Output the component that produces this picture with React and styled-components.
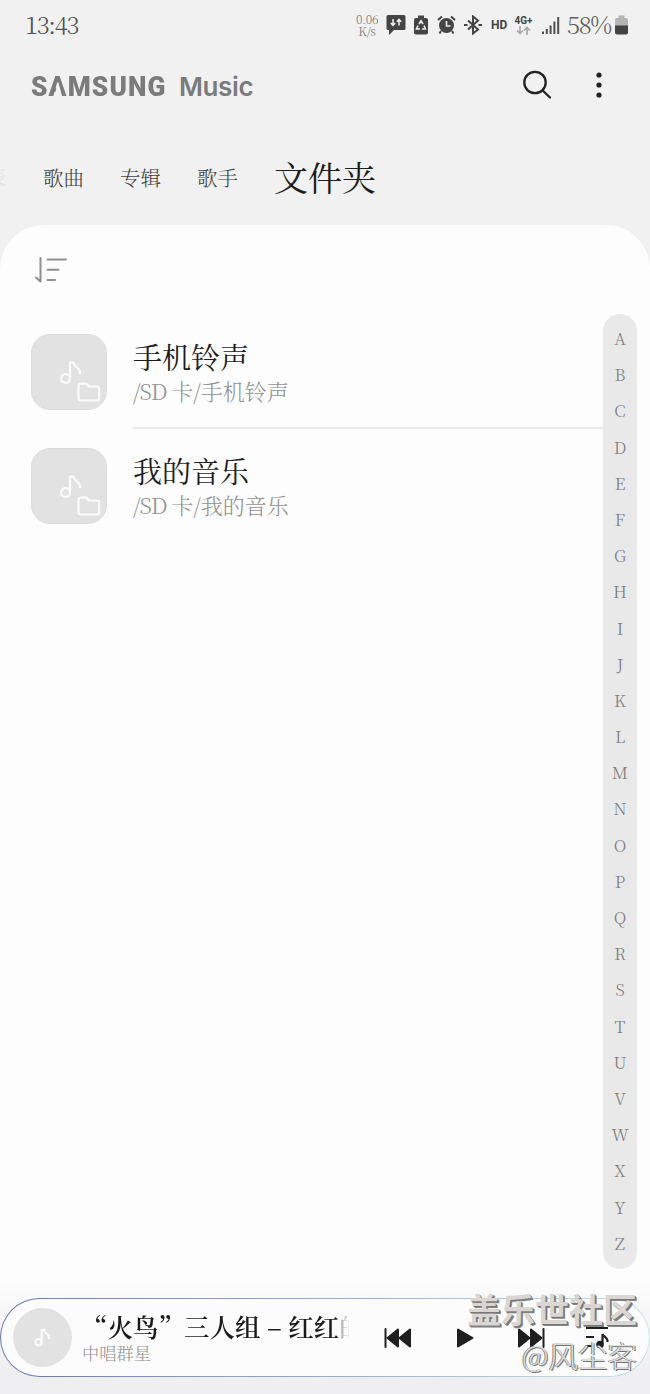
import React from "react";
import styled, { createGlobalStyle } from "styled-components";

const GlobalStyle = createGlobalStyle`
  * {
    box-sizing: border-box;
  }
  body {
    margin: 0;
    background: #f1f1f1;
    font-family: "Noto Serif CJK SC", "Liberation Serif", "Noto Sans CJK SC", serif;
    font-weight: 300;
  }
  svg {
    display: block;
    flex: none;
  }
`;

const Screen = styled.div`
  position: relative;
  display: flex;
  flex-direction: column;
  width: 650px;
  height: 1394px;
  overflow: hidden;
  background: #f1f1f1;
`;

const StatusBar = styled.div`
  display: flex;
  align-items: center;
  height: 50px;
  padding: 0 22px 0 25px;
  color: #505050;
`;

const Clock = styled.span`
  flex: 1;
  font-size: 24px;
  line-height: 28px;
  letter-spacing: -1.3px;
  padding-bottom: 2px;
`;

const Speed = styled.span`
  width: 24px;
  margin-right: 7px;
  font-size: 12px;
  line-height: 12px;
  letter-spacing: -0.3px;
  text-align: center;
  color: #777;
`;

const StatusIcon = styled.svg`
  margin-right: ${(p) => p.$gap || 0}px;
`;

const Hd = styled.span`
  width: 17px;
  margin-right: 6px;
  font: bold 12px "Roboto", sans-serif;
  color: #444;
`;

const Network = styled.span`
  display: flex;
  flex-direction: column;
  align-items: center;
  width: 19px;
  margin-right: 9px;
  font: bold 10px/11px "Roboto", sans-serif;
  color: #444;
`;

const Percent = styled.span`
  width: 45px;
  margin-right: 3px;
  padding-bottom: 2px;
  font-size: 24px;
  line-height: 28px;
  letter-spacing: -1.3px;
  white-space: nowrap;
  color: #606060;
`;

const Header = styled.header`
  display: flex;
  align-items: center;
  height: 70px;
  padding: 0 44px 0 31px;
`;

const Logo = styled.h1`
  display: flex;
  align-items: center;
  flex: 1;
  margin: 0;
  padding-top: 3px;
  color: #7b7b7b;
  line-height: 30px;
`;

const Brand = styled.span`
  width: 148px;
  font: 900 27.5px/30px "Roboto", "Liberation Sans", sans-serif;

  span {
    display: inline-block;
    transform: scaleX(0.955);
    transform-origin: left;
    letter-spacing: 1.2px;
  }
`;

/* the brand's A has no crossbar */
const OpenA = styled.i`
  position: relative;
  font-style: normal;
  &::after {
    content: "";
    position: absolute;
    left: 5.5px;
    bottom: 5px;
    width: 9px;
    height: 16px;
    background: #f1f1f1;
    clip-path: polygon(50% 0, 100% 100%, 0 100%);
  }
`;

const Product = styled.span`
  font: 600 26px/30px "Inter", sans-serif;
  letter-spacing: -0.4px;
`;

const HeaderIcons = styled.div`
  display: flex;
  align-items: center;
  gap: 40px;
`;

const Tabs = styled.nav`
  display: flex;
  align-items: center;
  height: 105px;
  padding: 8px 0 0;
`;

const Tab = styled.span`
  margin-right: ${(p) => p.$gap || 0}px;
  font-size: ${(p) => (p.$active ? 34 : 20.5)}px;
  font-weight: ${(p) => (p.$active ? 400 : 300)};
  line-height: 40px;
  color: ${(p) => (p.$active ? "#1c1c1c" : "#404040")};
`;

const CutTab = styled.span`
  display: flex;
  justify-content: flex-end;
  width: 6px;
  margin-right: 37px;
  overflow: hidden;
  font-size: 20px;
  white-space: nowrap;
  color: #e3e3e3;
`;

const Panel = styled.main`
  display: flex;
  flex-direction: column;
  height: 1169px;
  border-radius: 44px 44px 0 0;
  background: linear-gradient(#fdfdfd 0, #fdfdfd 1050px, #efeff1 1145px);
`;

const Toolbar = styled.div`
  height: 89px;
  padding: 31px 32px 0;
`;

const Body = styled.div`
  display: flex;
  height: 955px;
  padding-right: 13px;
`;

const List = styled.div`
  flex: 1;
  padding-top: 1px;
`;

const Row = styled.div`
  display: flex;
  align-items: center;
  height: 114px;
  padding-left: 31px;
  gap: 26px;
`;

const Cover = styled.div`
  width: 76px;
  height: 76px;
  border-radius: 19px;
  border: 1px solid #dcdcdc;
  background: #e2e2e2;
`;

const RowText = styled.div`
  display: flex;
  flex-direction: column;
  flex: 1;
  height: 114px;
  padding-top: 23px;
  border-bottom: ${(p) => (p.$divider ? "2px solid #e8e8e8" : "none")};
`;

const Name = styled.span`
  font-size: 29px;
  font-weight: 400;
  line-height: 38px;
  color: #1d1d1d;
`;

const Path = styled.span`
  font-size: 22px;
  line-height: 30px;
  color: #929292;
`;

const Storage = styled.span`
  letter-spacing: -1px;
`;

const IndexBar = styled.div`
  display: flex;
  flex-direction: column;
  width: 34px;
  height: 955px;
  padding: 7px 0;
  border-radius: 17px;
  background: #e9e9e9;
`;

const Letter = styled.span`
  height: 36.2px;
  font-size: 16.5px;
  line-height: 35px;
  text-align: center;
  color: #7c7c7c;
`;

const Player = styled.footer`
  display: flex;
  align-items: center;
  height: 79px;
  margin-top: 29px;
  padding: 0 25px 0 12px;
  border: 1.5px solid transparent;
  border-radius: 40px;
  background:
    linear-gradient(#fcfcfd, #fcfcfd) padding-box,
    linear-gradient(90deg, #6878b4, #92add0 50%, #c6e5e5) border-box;
`;

const Disc = styled.div`
  display: flex;
  align-items: center;
  justify-content: center;
  width: 59px;
  height: 59px;
  border-radius: 50%;
  background: #e2e2e2;
`;

const Track = styled.div`
  display: flex;
  flex-direction: column;
  width: 267px;
  margin-left: 10px;
  padding-bottom: 3px;
`;

const Title = styled.span`
  height: 32px;
  overflow: hidden;
  font-size: 25.5px;
  font-weight: 600;
  line-height: 32px;
  white-space: nowrap;
  color: #1b1b1b;
  mask-image: linear-gradient(90deg, #000 254px, rgba(0, 0, 0, 0.4) 258px, transparent 268px);
`;

const Artist = styled.span`
  font-size: 17.3px;
  line-height: 21px;
  color: #929292;
`;

const Controls = styled.div`
  display: flex;
  align-items: center;
  width: 228px;
  margin-left: 35px;
`;

const Control = styled.svg`
  margin-right: ${(p) => p.$gap || 0}px;
`;

const Watermark = styled.div`
  position: absolute;
  right: 13px;
  bottom: 17px;
  display: flex;
  flex-direction: column;
  align-items: flex-end;
  font-family: "Noto Sans CJK SC", sans-serif;
  white-space: nowrap;
`;

const Community = styled.span`
  font-size: 34px;
  font-weight: 700;
  line-height: 44px;
  color: #d9d6d4;
  text-shadow: 1px 1px 0 #777, 2px 2px 0 #858585;
`;

const Author = styled.span`
  font-size: 29.5px;
  font-weight: 300;
  line-height: 46px;
  color: #dcdcdc;
  text-shadow: 1px 1px 0 #747474, -1px 0 0 #8a8a8a;
`;

const Note = ({ size, color }) => (
  <svg width={size} height={size} viewBox="0 0 24 24" fill="none" stroke={color} strokeWidth="2.8" strokeLinecap="round">
    <circle cx="7" cy="18" r="4" />
    <path d="M11 18V2.500h3c0 4 6.500 4 6.300 10.500" strokeLinejoin="round" />
  </svg>
);

const FolderCover = () => (
  <Cover>
    <svg width="74" height="74" viewBox="0 0 74 74" fill="none" stroke="#fbfbfb" strokeWidth="2.2" strokeLinejoin="round" strokeLinecap="round">
      <circle cx="33.500" cy="43.500" r="4.400" />
      <path d="M38 43.500V27.500h3.500c0 4.500 7 4.500 6.500 11" />
      <path d="M46.500 51c0-1.500.8-2.300 2.300-2.300h5.700l2.300 2.800h8c1.500 0 2.300.8 2.300 2.300v9.500c0 1.500-.8 2.200-2.300 2.200h-16c-1.500 0-2.300-.7-2.300-2.200z" />
    </svg>
  </Cover>
);

const folders = ["手机铃声", "我的音乐"];

const letters = "ABCDEFGHIJKLMNOPQRSTUVWXYZ".split("");

const App = () => {
  return (
    <Screen>
      <GlobalStyle />
      <StatusBar>
        <Clock>13:43</Clock>
        <Speed>0.06 K/s</Speed>
        <StatusIcon $gap={8} width="20" height="20" viewBox="0 0 20 20">
          <path d="M2 0h16q1.500 0 1.500 1.500v12q0 1.500-1.500 1.500H8l-5 5v-5H2Q.5 15 .5 13.500v-12Q.5 0 2 0z" fill="#444" />
          <path d="M7 4v6M4.800 8L7 10.300 9.200 8M13 10.500v-6M10.800 6.700L13 4.400l2.200 2.300" fill="none" stroke="#f1f1f1" strokeWidth="1.500" />
        </StatusIcon>
        <StatusIcon $gap={9} width="14" height="20" viewBox="0 0 14 20">
          <path d="M4 0.500h6V3h2q2 0 2 2v12.500q0 2-2 2H2q-2 0-2-2V5q0-2 2-2h2z" fill="#444" />
          <path d="M5 9l2-3.200L9 9M10 10.500l1.500 3.500H8M6 14H2.500L4 10.500" fill="none" stroke="#f1f1f1" strokeWidth="1.600" />
        </StatusIcon>
        <StatusIcon $gap={8} width="19" height="20" viewBox="0 0 19 20">
          <circle cx="9.500" cy="10.500" r="7.500" fill="#444" />
          <path d="M1 5l4-3.500M18 5l-4-3.500M4 16l-1.500 2.500M15 16l1.500 2.500" stroke="#444" strokeWidth="2" />
          <path d="M9.500 6v5h4" fill="none" stroke="#f1f1f1" strokeWidth="1.600" />
        </StatusIcon>
        <StatusIcon $gap={9} width="18" height="20" viewBox="0 0 18 20" fill="none" stroke="#444" strokeWidth="2">
          <path d="M4 5.500l10 9-5 4V1.500l5 4-10 9" />
          <path d="M0 10h3.500M14.500 10H18" />
        </StatusIcon>
        <Hd>HD</Hd>
        <Network>
          4G+
          <svg width="15" height="9" viewBox="0 0 15 9" fill="none" stroke="#aaa" strokeWidth="1.700">
            <path d="M4 0v7.500M1 4.500l3 3 3-3M11 9V1.500M8 4.500l3-3 3 3" />
          </svg>
        </Network>
        <StatusIcon $gap={7} width="18" height="17" viewBox="0 0 18 17" fill="#505050">
          <path d="M0 14.500h2V17H0zM3.800 12h2v5h-2zM7.600 8.500h2V17h-2zM11.400 4.500h2V17h-2zM15.200 0h2V17h-2z" />
        </StatusIcon>
        <Percent>58%</Percent>
        <svg width="13" height="20" viewBox="0 0 13 20">
          <path d="M3.500.5h6V3h1.500q2 0 2 2v6H0V5q0-2 2-2h1.500z" fill="#b5b5b5" />
          <path d="M0 10.500h13v7q0 2-2 2H2q-2 0-2-2z" fill="#444" />
        </svg>
      </StatusBar>

      <Header>
        <Logo>
          <Brand>
            <span>
              S<OpenA>A</OpenA>MSUNG
            </span>
          </Brand>
          <Product>Music</Product>
        </Logo>
        <HeaderIcons>
          <svg width="30" height="30" viewBox="0 0 30 30" fill="none" stroke="#222" strokeWidth="2.300" strokeLinecap="round">
            <circle cx="13" cy="12.500" r="10.700" />
            <path d="M20.700 20.500l7.300 7" />
          </svg>
          <svg width="14" height="28" viewBox="0 0 14 28" fill="#222">
            <circle cx="7" cy="4" r="2.600" />
            <circle cx="7" cy="14" r="2.600" />
            <circle cx="7" cy="24" r="2.600" />
          </svg>
        </HeaderIcons>
      </Header>

      <Tabs>
        <CutTab>表</CutTab>
        <Tab $gap={36}>歌曲</Tab>
        <Tab $gap={36}>专辑</Tab>
        <Tab $gap={36}>歌手</Tab>
        <Tab $active>文件夹</Tab>
      </Tabs>

      <Panel>
        <Toolbar>
          <svg width="36" height="28" viewBox="0 0 36 28" fill="none" stroke="#8f8f8f" strokeWidth="2" strokeLinecap="round">
            <path d="M8.500 2v23.500L4 21.500M15.500 3.500h18.500M15.500 13.800h11M15.500 24h7.500" strokeLinejoin="round" />
          </svg>
        </Toolbar>
        <Body>
          <List>
            {folders.map((folder, i) => (
              <Row key={folder}>
                <FolderCover />
                <RowText $divider={i < folders.length - 1}>
                  <Name>{folder}</Name>
                  <Path>
                    <Storage>/SD </Storage>卡/{folder}
                  </Path>
                </RowText>
              </Row>
            ))}
          </List>
          <IndexBar>
            {letters.map((letter) => (
              <Letter key={letter}>{letter}</Letter>
            ))}
          </IndexBar>
        </Body>
        <Player>
          <Disc>
            <Note size={19} color="#fafafa" />
          </Disc>
          <Track>
            <Title>“火鸟”三人组 – 红红的</Title>
            <Artist>中唱群星</Artist>
          </Track>
          <Controls>
            <Control $gap={44} width="28" height="22" viewBox="0 0 28 22" fill="#1f1f1f" stroke="#1f1f1f" strokeLinejoin="round">
              <path d="M1.500 2v18" strokeWidth="2" strokeLinecap="round" />
              <path d="M14 2.500v17L3.500 11zM26 2.500v17L15.500 11z" strokeWidth="2" />
            </Control>
            <Control $gap={43} width="18" height="22" viewBox="0 0 18 22" fill="#1f1f1f" stroke="#1f1f1f" strokeLinejoin="round">
              <path d="M2 2.500v17L16.500 11z" strokeWidth="2" />
            </Control>
            <Control $gap={40} width="28" height="22" viewBox="0 0 28 22" fill="#1f1f1f" stroke="#1f1f1f" strokeLinejoin="round">
              <path d="M26.500 2v18" strokeWidth="2" strokeLinecap="round" />
              <path d="M2 2.500v17L12.500 11zM14 2.500v17L24.500 11z" strokeWidth="2" />
            </Control>
            <Control width="26" height="24" viewBox="0 0 26 24" fill="none" stroke="#1f1f1f" strokeWidth="2.200">
              <path d="M1 2h22M1 11h8M1 20h7" />
              <circle cx="15" cy="18.500" r="2.700" fill="#1f1f1f" />
              <path d="M17.500 18.500V8c1 3 5.500 3 5 8" />
            </Control>
          </Controls>
        </Player>
      </Panel>

      <Watermark>
        <Community>盖乐世社区</Community>
        <Author>@风尘客</Author>
      </Watermark>
    </Screen>
  );
};

export default App;
